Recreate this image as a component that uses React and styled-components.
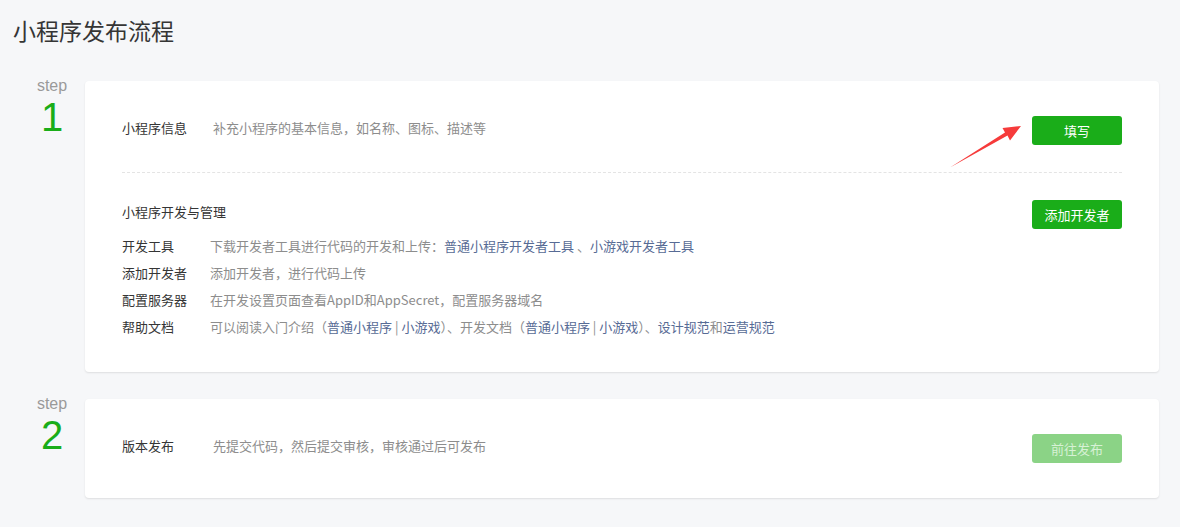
import React from "react";
import styled, { createGlobalStyle } from "styled-components";

const Global = createGlobalStyle`
  html, body { margin: 0; padding: 0; background: #f6f7f9; }
  body { font-family: "Noto Sans CJK SC", "Noto Sans", sans-serif; color: #353535; }
`;

const Page = styled.div`
  padding: 14px 21px 30px 13px;
`;

const Title = styled.h1`
  margin: 0 0 35px;
  font-size: 23px;
  font-weight: 400;
  line-height: 32px;
  color: #353535;
`;

const StepRow = styled.div`
  display: flex;
  align-items: flex-start;
  margin-bottom: 27px;
`;

const StepBadge = styled.div`
  width: 66px;
  flex: none;
  padding-left: 6px;
  margin-top: -4px;
  text-align: center;
  font-family: "Liberation Sans", Arial, sans-serif;
`;

const StepWord = styled.div`
  font-size: 16px;
  line-height: 18px;
  color: #9a9a9a;
`;

const StepNum = styled.div`
  font-size: 40px;
  line-height: 45px;
  color: #1aad19;
`;

const Card = styled.div`
  position: relative;
  flex: 1;
  background: #fff;
  border-radius: 4px;
  box-shadow: 0 1px 2px rgba(0, 0, 0, 0.1);
  padding: 0 37px;
`;

const Section = styled.div`
  padding: ${(p) => p.$pad};
  border-bottom: ${(p) => (p.$divider ? "1px dashed #e4e4e4" : "none")};
`;

const Line = styled.div`
  display: flex;
  align-items: flex-start;
  font-size: 13px;
`;

const Label = styled.div`
  width: ${(p) => p.$w || 91}px;
  flex: none;
  line-height: 24px;
  color: #353535;
`;

const Desc = styled.div`
  flex: 1;
  line-height: 24px;
  color: #8d8d8d;
`;

const Heading = styled.div`
  flex: 1;
  line-height: 24px;
  color: #353535;
`;

const List = styled.div`
  margin-top: 3px;
  display: flex;
  flex-direction: column;
`;

const Item = styled.div`
  display: flex;
  font-size: 13px;
  line-height: 27px;
`;

const ItemLabel = styled.div`
  width: 88px;
  flex: none;
  color: #353535;
`;

const ItemDesc = styled.div`
  color: #8d8d8d;
`;

const Link = styled.a`
  color: #576b95;
  text-decoration: none;
`;

const Button = styled.button`
  width: 90px;
  height: 29px;
  flex: none;
  border: none;
  border-radius: 3px;
  background: ${(p) => (p.disabled ? "#8bd386" : "#1aad19")};
  color: ${(p) => (p.disabled ? "#d7f1d5" : "#fff")};
  font-family: inherit;
  font-size: 13px;
  padding: 0;
  cursor: ${(p) => (p.disabled ? "default" : "pointer")};
`;

const Arrow = styled.svg`
  position: absolute;
  left: 860px;
  top: 39px;
  width: 80px;
  height: 52px;
`;

export default function App() {
  return (
    <>
      <Global />
      <Page>
        <Title>小程序发布流程</Title>

        <StepRow>
          <StepBadge>
            <StepWord>step</StepWord>
            <StepNum>1</StepNum>
          </StepBadge>
          <Card>
            <Section $pad="35px 0 27px" $divider>
              <Line>
                <Label $w={91}>小程序信息</Label>
                <Desc>补充小程序的基本信息，如名称、图标、描述等</Desc>
                <Button>填写</Button>
              </Line>
            </Section>
            <Section $pad="27px 0 32px">
              <Line>
                <Heading>小程序开发与管理</Heading>
                <Button>添加开发者</Button>
              </Line>
              <List>
                <Item>
                  <ItemLabel>开发工具</ItemLabel>
                  <ItemDesc>
                    下载开发者工具进行代码的开发和上传：
                    <Link href="#">普通小程序开发者工具</Link> 、
                    <Link href="#">小游戏开发者工具</Link>
                  </ItemDesc>
                </Item>
                <Item>
                  <ItemLabel>添加开发者</ItemLabel>
                  <ItemDesc>添加开发者，进行代码上传</ItemDesc>
                </Item>
                <Item>
                  <ItemLabel>配置服务器</ItemLabel>
                  <ItemDesc>在开发设置页面查看AppID和AppSecret，配置服务器域名</ItemDesc>
                </Item>
                <Item>
                  <ItemLabel>帮助文档</ItemLabel>
                  <ItemDesc>
                    可以阅读入门介绍（<Link href="#">普通小程序</Link> | <Link href="#">小游戏</Link>）、开发文档（<Link href="#">普通小程序</Link> | <Link href="#">小游戏</Link>）、<Link href="#">设计规范</Link>和<Link href="#">运营规范</Link>
                  </ItemDesc>
                </Item>
              </List>
            </Section>
            <Arrow viewBox="0 0 80 52">
              <polygon
                points="5,47.5 60,12.5 57.5,8 76,6 65,20.5 62.5,15.5"
                fill="#f63b3b"
              />
            </Arrow>
          </Card>
        </StepRow>

        <StepRow>
          <StepBadge>
            <StepWord>step</StepWord>
            <StepNum>2</StepNum>
          </StepBadge>
          <Card>
            <Section $pad="35px 0 35px">
              <Line>
                <Label $w={91}>版本发布</Label>
                <Desc>先提交代码，然后提交审核，审核通过后可发布</Desc>
                <Button disabled>前往发布</Button>
              </Line>
            </Section>
          </Card>
        </StepRow>
      </Page>
    </>
  );
}
